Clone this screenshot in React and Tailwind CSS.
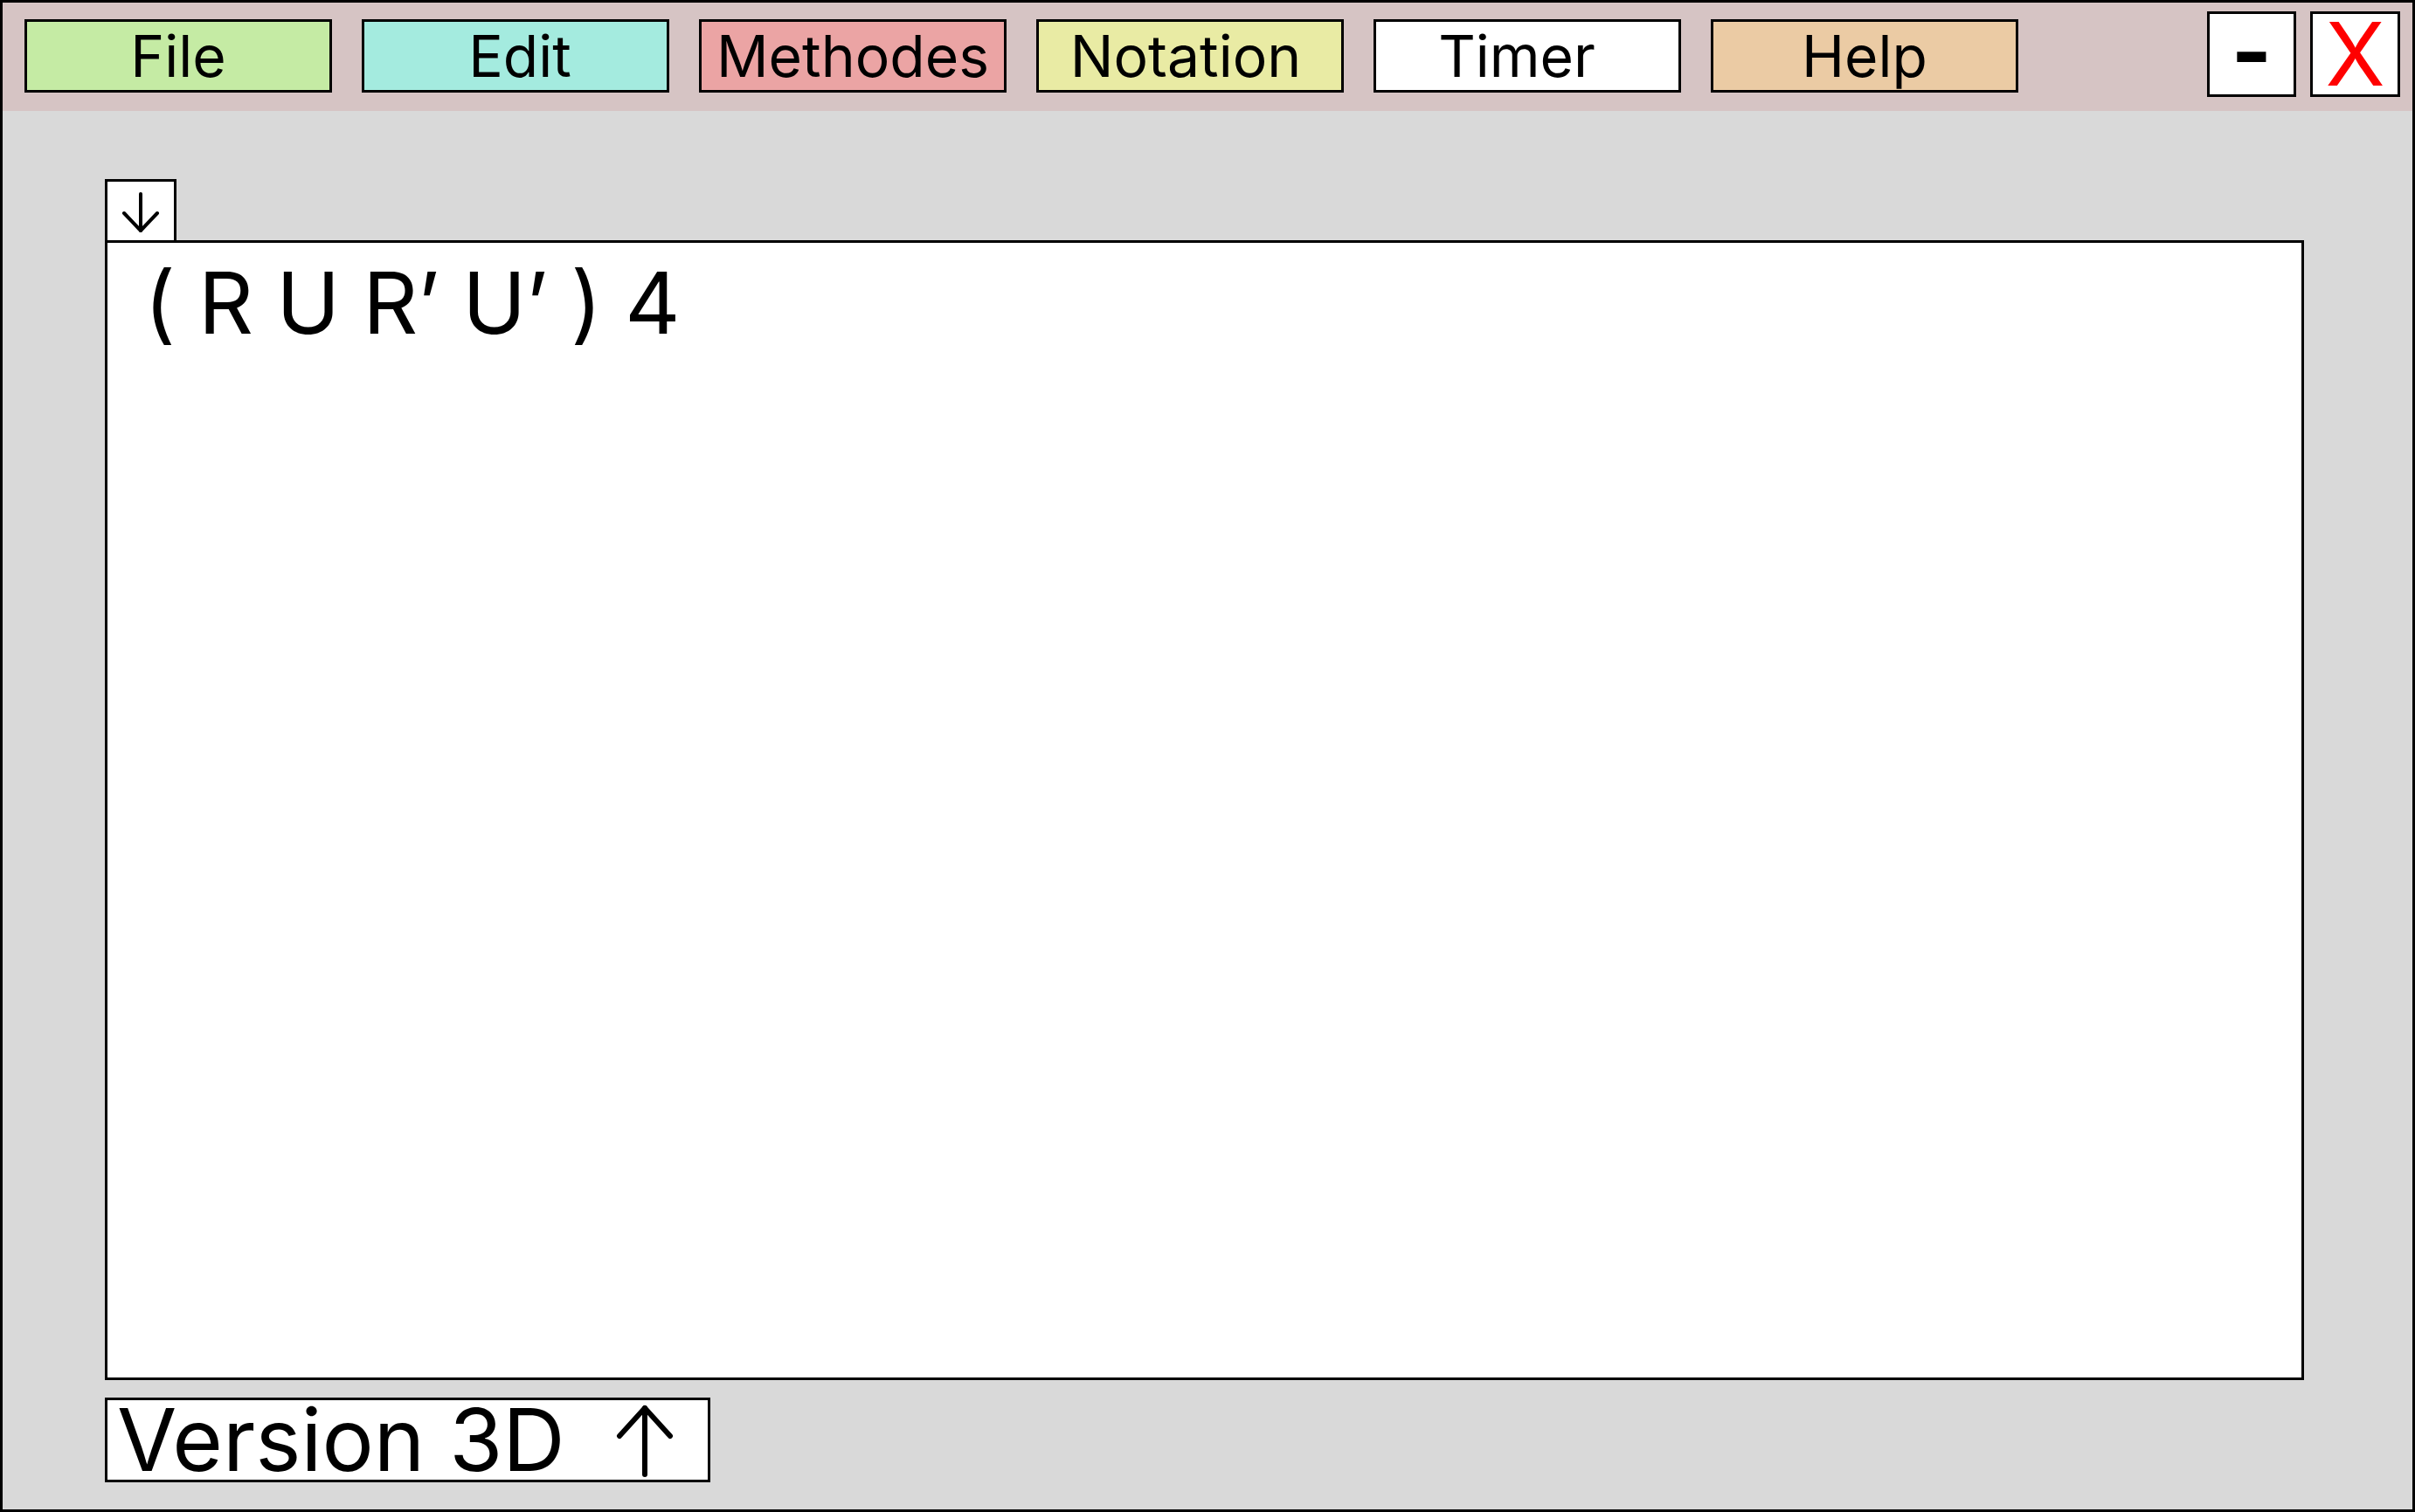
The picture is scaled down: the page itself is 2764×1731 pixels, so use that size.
const MENU = [
  { label: "File", bg: "bg-[#c5eba4]", pad: "" },
  { label: "Edit", bg: "bg-[#a4ebdf]", pad: "pl-[10px]" },
  { label: "Methodes", bg: "bg-[#eba4a4]", pad: "" },
  { label: "Notation", bg: "bg-[#e9eba4]", pad: "pr-[10px]" },
  { label: "Timer", bg: "bg-white", pad: "pr-[24px]" },
  { label: "Help", bg: "bg-[#ebcba4]", pad: "" },
];

function ArrowDown() {
  return (
    <svg width="48" height="52" viewBox="0 0 48 52" fill="none" stroke="black" strokeWidth="4" strokeLinecap="round" strokeLinejoin="round">
      <path d="M24 6v42" />
      <path d="M5 28l19 20 19-20" />
    </svg>
  );
}

function ArrowUp() {
  return (
    <svg width="66" height="84" viewBox="0 0 66 84" fill="none" stroke="black" strokeWidth="6" strokeLinecap="round" strokeLinejoin="round">
      <path d="M33 4v76" />
      <path d="M4 36L33 4l29 32" />
    </svg>
  );
}

export default function App() {
  return (
    <div className="w-[2764px] h-[1731px] border-[3px] border-black flex flex-col font-['Inter',sans-serif] text-black">
      <div className="h-[124px] bg-[#d6c4c4] flex items-start pl-[25px] pr-[14px] shrink-0">
        <div className="flex gap-[34px] mt-[19px]">
          {MENU.map((m) => (
            <div
              key={m.label}
              className={`w-[352px] h-[84px] border-[3px] border-black flex items-center justify-center text-[66px] leading-none ${m.bg} ${m.pad}`}
            >
              {m.label}
            </div>
          ))}
        </div>
        <div className="ml-auto flex gap-[16px] mt-[10px]">
          <div className="w-[102px] h-[98px] bg-white border-[3px] border-black flex items-center justify-center text-[100px] font-bold leading-none pb-[6px]">
            -
          </div>
          <div className="w-[103px] h-[98px] bg-white border-[3px] border-black flex items-center justify-center text-[100px] leading-none text-[#ff0000]">
            X
          </div>
        </div>
      </div>

      <div className="flex-1 bg-[#d9d9d9] pl-[117px] pt-[78px]">
        <div className="w-[82px] h-[70px] bg-white border-[3px] border-b-0 border-black flex items-start justify-center pt-[8px]">
          <ArrowDown />
        </div>
        <div className="w-[2517px] h-[1305px] bg-white border-[3px] border-black pl-[42px] pt-[20px]">
          <p className="text-[98px] leading-none tracking-[-0.7px]">( R U R’ U’ ) 4</p>
        </div>
        <div className="mt-[20px] w-[693px] h-[97px] bg-white border-[3px] border-black flex items-center pl-[11px]">
          <span className="text-[99px] leading-none">Version 3D</span>
          <span className="ml-[58px] pt-[2px]">
            <ArrowUp />
          </span>
        </div>
      </div>
    </div>
  );
}
